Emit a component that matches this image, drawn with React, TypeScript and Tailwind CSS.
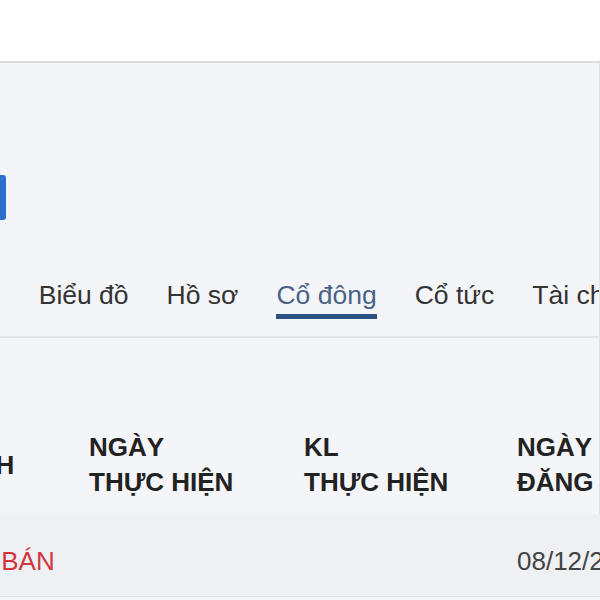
const tabs = ["Tổng quan", "Biểu đồ", "Hồ sơ", "Cổ đông", "Cổ tức", "Tài chính"]

export default function App() {
    return (
        <div
            className="w-[600px] h-[600px] overflow-hidden bg-[#f4f5f8] text-[#333]"
            style={{ fontFamily: '"Liberation Sans", Arial, sans-serif' }}
        >
            {/* top bar */}
            <div className="h-[63px] bg-white border-b-2 border-[#dcdcdc]" />

            <div className="border-r border-[#e2e3e6]">
                {/* action row */}
                <div className="h-[157px] flex items-end">
                    <div className="w-[6px] h-[45px] bg-[#2c6fd1] rounded-r-[3px]" />
                </div>

                {/* tabs */}
                <div className="h-[118px] border-b-2 border-[#e3e4e7] flex items-end overflow-hidden">
                    <div className="flex gap-[38px] -ml-[126px] whitespace-nowrap pb-[17px]">
                        {tabs.map((t) => (
                            <div key={t} className="flex flex-col">
                                <span
                                    className={`text-[26.5px] leading-[30px] ${t === "Cổ đông" ? "text-[#4a6285]" : "text-[#333]"}`}
                                >
                                    {t}
                                </span>
                                <span
                                    className={`h-[5px] mt-[4px] ${t === "Cổ đông" ? "bg-[#2a5285]" : "bg-transparent"}`}
                                />
                            </div>
                        ))}
                    </div>
                </div>

                {/* table */}
                <div className="-ml-[123px] w-[900px]">
                    <div className="h-[176px] flex items-end pb-[14px] font-bold text-[26px] leading-[35px] text-[#222]">
                        <div className="w-[212px] self-stretch flex items-end pb-[17px]">GIAO DỊCH</div>
                        <div className="w-[215px]">
                            NGÀY
                            <br />
                            THỰC HIỆN
                        </div>
                        <div className="w-[213px]">
                            KL
                            <br />
                            THỰC HIỆN
                        </div>
                        <div className="w-[213px]">
                            NGÀY
                            <br />
                            ĐĂNG KÝ
                        </div>
                    </div>
                    <div className="h-[83px] pt-[32px] bg-[#eef0f3] border-b border-[#e2e3e6] flex items-start text-[26px] leading-[30px]">
                        <div className="w-[212px] text-[#d2363f]">ĐĂNG KÝ BÁN</div>
                        <div className="w-[215px]" />
                        <div className="w-[213px]" />
                        <div className="w-[213px] text-[#444]">08/12/2023</div>
                    </div>
                </div>
            </div>
        </div>
    )
}
